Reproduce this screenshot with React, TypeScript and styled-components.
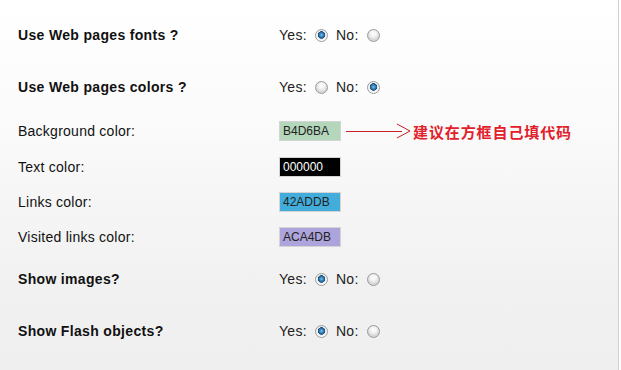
import React from 'react';
import styled, { createGlobalStyle } from 'styled-components';

const GlobalStyle = createGlobalStyle`
  html, body {
    margin: 0;
    padding: 0;
    background: #fff;
  }
`;

const Panel = styled.div`
  width: 618px;
  height: 367px;
  border-right: 1px solid #d0d0d0;
  border-bottom: 1px solid #d0d0d0;
  background: linear-gradient(to bottom, #ffffff 0%, #fbfbfb 30%, #f1f1f1 75%, #efefef 100%);
  padding-top: 9px;
  box-sizing: content-box;
  font-family: "Liberation Sans", Arial, sans-serif;
  color: #111;
`;

const Row = styled.div<{ $h: number }>`
  display: grid;
  grid-template-columns: 261px 1fr;
  align-items: center;
  height: ${(p) => p.$h}px;
  padding-left: 18px;
`;

const Question = styled.div`
  font-size: 14px;
  font-weight: bold;
  letter-spacing: 0.33px;
`;

const Label = styled.div`
  font-size: 14px;
  letter-spacing: 0.25px;
`;

const Choices = styled.div`
  display: flex;
  align-items: center;
  font-size: 14px;
  letter-spacing: 0.3px;
  color: #222;
`;

const ChoiceText = styled.span`
  margin-right: 8px;
`;

const Radio = styled.span<{ $on?: boolean }>`
  display: inline-block;
  width: 11px;
  height: 11px;
  border-radius: 50%;
  border: 1px solid #9a9a9a;
  margin-right: 8px;
  background: ${(p) =>
    p.$on
      ? 'radial-gradient(circle at 50% 45%, #7fc3ee 0, #2f7fb8 2px, #1d4f78 3.5px, #e9e9e9 4px, #ffffff 6px)'
      : 'radial-gradient(circle at 50% 35%, #ffffff 0, #f2f2f2 3px, #d6d6d6 6px)'};
`;

const ColorLine = styled.div`
  display: flex;
  align-items: center;
`;

const ColorBox = styled.div<{ $bg: string; $fg: string }>`
  width: 57px;
  height: 18px;
  border: 1px solid #d4d4d4;
  background: ${(p) => p.$bg};
  color: ${(p) => p.$fg};
  font-size: 12px;
  line-height: 18px;
  padding-left: 3px;
  box-sizing: content-box;
  margin-right: 3px;
`;

const Note = styled.span`
  font-family: "Noto Sans CJK SC", sans-serif;
  font-size: 15px;
  font-weight: bold;
  color: #e2202a;
  letter-spacing: 0.9px;
`;

function YesNo({ yes }: { yes: boolean }) {
  return (
    <Choices>
      <ChoiceText>Yes:</ChoiceText>
      <Radio $on={yes} />
      <ChoiceText>No:</ChoiceText>
      <Radio $on={!yes} />
    </Choices>
  );
}

function Arrow() {
  return (
    <svg width="69" height="20" viewBox="0 0 69 20" style={{ display: 'block' }}>
      <path d="M2 10.5 H58" stroke="#c8202a" strokeWidth="1" fill="none" />
      <path d="M53 3 L66 10 L53 17" stroke="#c8202a" strokeWidth="1" fill="none" />
    </svg>
  );
}

export default function App() {
  return (
    <>
      <GlobalStyle />
      <Panel>
        <Row $h={52}>
          <Question>Use Web pages fonts ?</Question>
          <YesNo yes={true} />
        </Row>
        <Row $h={52}>
          <Question>Use Web pages colors ?</Question>
          <YesNo yes={false} />
        </Row>
        <Row $h={36}>
          <Label>Background color:</Label>
          <ColorLine>
            <ColorBox $bg="#b4d6ba" $fg="#222">B4D6BA</ColorBox>
            <Arrow />
            <Note>建议在方框自己填代码</Note>
          </ColorLine>
        </Row>
        <Row $h={35}>
          <Label>Text color:</Label>
          <ColorLine>
            <ColorBox $bg="#000000" $fg="#fff">000000</ColorBox>
          </ColorLine>
        </Row>
        <Row $h={35}>
          <Label>Links color:</Label>
          <ColorLine>
            <ColorBox $bg="#42addb" $fg="#222">42ADDB</ColorBox>
          </ColorLine>
        </Row>
        <Row $h={35}>
          <Label>Visited links color:</Label>
          <ColorLine>
            <ColorBox $bg="#aca4db" $fg="#222">ACA4DB</ColorBox>
          </ColorLine>
        </Row>
        <Row $h={50}>
          <Question>Show images?</Question>
          <YesNo yes={true} />
        </Row>
        <Row $h={54}>
          <Question>Show Flash objects?</Question>
          <YesNo yes={true} />
        </Row>
      </Panel>
    </>
  );
}
